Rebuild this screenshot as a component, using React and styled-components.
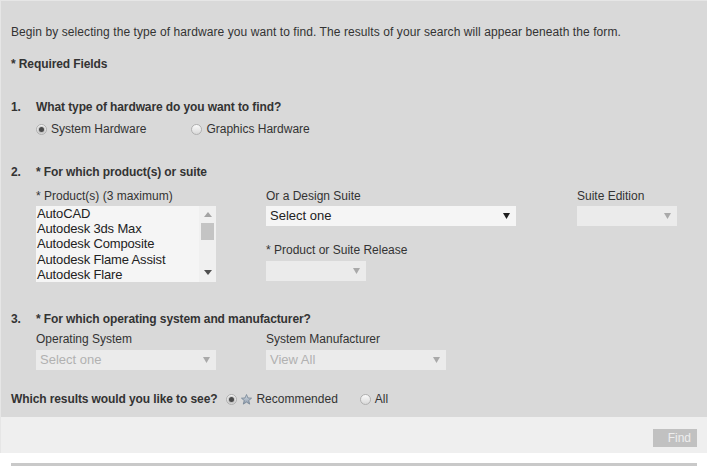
import React from "react";
import styled, { createGlobalStyle } from "styled-components";

const GlobalStyle = createGlobalStyle`
  html, body { margin: 0; padding: 0; background: #ffffff; }
  body { font-family: "Liberation Sans", Arial, sans-serif; color: #333333; }
  * { box-sizing: border-box; }
`;

const Page = styled.div`
  width: 707px;
`;

const Panel = styled.div`
  background: #d9d9d9;
  border-top: 1px solid #e6e6e6;
  border-left: 1px solid #e6e6e6;
`;

const Form = styled.div`
  padding: 24px 0 11px 10px;
  font-size: 12px;
  line-height: 14px;
  color: #333333;
`;

const Para = styled.p`
  margin: ${(p) => p.$top || 0}px 0 0 0;
  font-weight: ${(p) => (p.$bold ? "bold" : "normal")};
  letter-spacing: ${(p) => (p.$bold ? "-0.1px" : "0.08px")};
`;

const Section = styled.div`
  margin-top: ${(p) => p.$top}px;
`;

const Question = styled.div`
  display: flex;
  font-weight: bold;
  letter-spacing: -0.1px;
`;

const Num = styled.span`
  width: 25px;
  flex: none;
`;

const Body = styled.div`
  padding-left: 25px;
  margin-top: ${(p) => p.$top || 0}px;
`;

const RadioRow = styled.div`
  display: flex;
  align-items: center;
  gap: ${(p) => p.$gap || 45}px;
  height: 14px;
`;

const Option = styled.label`
  display: inline-flex;
  align-items: center;
  gap: 4px;
  cursor: pointer;
`;

const Radio = styled.span`
  position: relative;
  width: 11px;
  height: 11px;
  border-radius: 50%;
  border: 1px solid #b0b0b0;
  background: linear-gradient(#fbfbfb, #d8d8d8);
  flex: none;
  &::after {
    content: "";
    display: ${(p) => (p.$checked ? "block" : "none")};
    position: absolute;
    left: 2px;
    top: 2px;
    width: 5px;
    height: 5px;
    border-radius: 50%;
    background: #4a4a4a;
    box-shadow: 0 0 1px 1px rgba(120, 120, 120, 0.35);
  }
`;

const Grid = styled.div`
  display: grid;
  grid-template-columns: ${(p) => p.$cols};
  align-items: start;
`;

const Field = styled.div`
  display: flex;
  flex-direction: column;
  margin-top: ${(p) => p.$top || 0}px;
`;

const Label = styled.span`
  display: block;
  line-height: 14px;
`;

const SelectBox = styled.div`
  margin-top: ${(p) => p.$gap}px;
  width: ${(p) => p.$w}px;
  height: 20px;
  background: ${(p) => (p.$disabled ? "#ebebeb" : "#f5f5f5")};
  color: ${(p) => (p.$disabled ? "#b1b1b1" : "#222222")};
  font-size: 13px;
  line-height: 20px;
  padding: 0 6px 0 4px;
  display: flex;
  align-items: center;
  justify-content: space-between;
`;

const Arrow = ({ color }) => (
  <svg width="7" height="6" viewBox="0 0 7 6">
    <polygon points="0,0 7,0 3.5,6" fill={color} />
  </svg>
);

const ListBox = styled.div`
  margin-top: 3px;
  width: 180px;
  height: 76px;
  background: #f5f5f5;
  display: flex;
`;

const Items = styled.div`
  flex: 1;
  padding-left: 1px;
  font-size: 13px;
  line-height: 15.2px;
  letter-spacing: -0.15px;
  color: #222222;
  overflow: hidden;
`;

const ScrollBar = styled.div`
  width: 17px;
  background: #f0f0f0;
  display: flex;
  flex-direction: column;
  align-items: center;
  padding-top: 6px;
`;

const Thumb = styled.div`
  width: 13px;
  height: 17px;
  margin-top: 6px;
  background: #c4c4c4;
`;

const ScrollSpacer = styled.div`
  flex: 1;
`;

const ScrollArrow = ({ up, color }) => (
  <svg width="8" height="5" viewBox="0 0 8 5" style={{ display: "block", marginBottom: up ? 0 : 7 }}>
    <polygon points={up ? "0,5 8,5 4,0" : "0,0 8,0 4,5"} fill={color} />
  </svg>
);

const Star = () => (
  <svg width="11" height="11" viewBox="0 0 20 20">
    <defs>
      <linearGradient id="sg" x1="0" y1="0" x2="0" y2="1">
        <stop offset="0" stopColor="#d5dde6" />
        <stop offset="1" stopColor="#8d9bab" />
      </linearGradient>
    </defs>
    <polygon
      points="10,1 12.6,7.2 19.2,7.6 14.1,11.8 15.8,18.4 10,14.7 4.2,18.4 5.9,11.8 0.8,7.6 7.4,7.2"
      fill="url(#sg)"
      stroke="#6f7f90"
      strokeWidth="1.4"
      strokeLinejoin="round"
    />
  </svg>
);

const ResultsRow = styled.div`
  display: flex;
  align-items: center;
  margin-top: 22px;
  height: 14px;
`;

const ResultsQ = styled.span`
  font-weight: bold;
  letter-spacing: -0.1px;
  margin-right: 9px;
`;

const Footer = styled.div`
  background: #efefef;
  height: 36px;
  display: flex;
  justify-content: flex-end;
  align-items: flex-start;
  padding: 12px 10px 0 0;
`;

const FindButton = styled.button`
  width: 44px;
  height: 18px;
  border: none;
  background: #c1c1c1;
  color: #eeeeee;
  font-family: "Liberation Sans", Arial, sans-serif;
  font-size: 12px;
  padding: 0 6px 0 0;
  text-align: right;
  line-height: 18px;
`;

const Rule = styled.div`
  margin: 10px 0 0 11px;
  width: 686px;
  height: 3px;
  background: #c9c9c9;
`;

const products = [
  "AutoCAD",
  "Autodesk 3ds Max",
  "Autodesk Composite",
  "Autodesk Flame Assist",
  "Autodesk Flare",
];

export default function App() {
  return (
    <>
      <GlobalStyle />
      <Page>
        <Panel>
          <Form>
            <Para>
              Begin by selecting the type of hardware you want to find. The results of your search will appear beneath the form.
            </Para>
            <Para $top={18} $bold>* Required Fields</Para>

            <Section $top={29}>
              <Question>
                <Num>1.</Num>
                <span>What type of hardware do you want to find?</span>
              </Question>
              <Body $top={8}>
                <RadioRow $gap={45}>
                  <Option>
                    <Radio $checked />
                    System Hardware
                  </Option>
                  <Option>
                    <Radio />
                    Graphics Hardware
                  </Option>
                </RadioRow>
              </Body>
            </Section>

            <Section $top={29}>
              <Question>
                <Num>2.</Num>
                <span>* For which product(s) or suite</span>
              </Question>
              <Body $top={10}>
                <Grid $cols="230px 311px 100px">
                  <Field>
                    <Label>* Product(s) (3 maximum)</Label>
                    <ListBox>
                      <Items>
                        {products.map((p) => (
                          <div key={p}>{p}</div>
                        ))}
                      </Items>
                      <ScrollBar>
                        <ScrollArrow up color="#a3a3a3" />
                        <Thumb />
                        <ScrollSpacer />
                        <ScrollArrow color="#4f4f4f" />
                      </ScrollBar>
                    </ListBox>
                  </Field>
                  <div>
                    <Field>
                      <Label>Or a Design Suite</Label>
                      <SelectBox $gap={3} $w={250}>
                        <span>Select one</span>
                        <Arrow color="#1e1e1e" />
                      </SelectBox>
                    </Field>
                    <Field $top={17}>
                      <Label>* Product or Suite Release</Label>
                      <SelectBox $gap={4} $w={100} $disabled>
                        <span />
                        <Arrow color="#a9a9a9" />
                      </SelectBox>
                    </Field>
                  </div>
                  <Field>
                    <Label>Suite Edition</Label>
                    <SelectBox $gap={3} $w={100} $disabled>
                      <span />
                      <Arrow color="#a9a9a9" />
                    </SelectBox>
                  </Field>
                </Grid>
              </Body>
            </Section>

            <Section $top={30}>
              <Question>
                <Num>3.</Num>
                <span>* For which operating system and manufacturer?</span>
              </Question>
              <Body $top={6}>
                <Grid $cols="230px 180px">
                  <Field>
                    <Label>Operating System</Label>
                    <SelectBox $gap={4} $w={180} $disabled>
                      <span>Select one</span>
                      <Arrow color="#a9a9a9" />
                    </SelectBox>
                  </Field>
                  <Field>
                    <Label>System Manufacturer</Label>
                    <SelectBox $gap={4} $w={180} $disabled>
                      <span>View All</span>
                      <Arrow color="#a9a9a9" />
                    </SelectBox>
                  </Field>
                </Grid>
              </Body>
            </Section>

            <ResultsRow>
              <ResultsQ>Which results would you like to see?</ResultsQ>
              <RadioRow $gap={22}>
                <Option>
                  <Radio $checked />
                  <Star />
                  Recommended
                </Option>
                <Option>
                  <Radio />
                  All
                </Option>
              </RadioRow>
            </ResultsRow>
          </Form>
          <Footer>
            <FindButton>Find</FindButton>
          </Footer>
        </Panel>
        <Rule />
      </Page>
    </>
  );
}
